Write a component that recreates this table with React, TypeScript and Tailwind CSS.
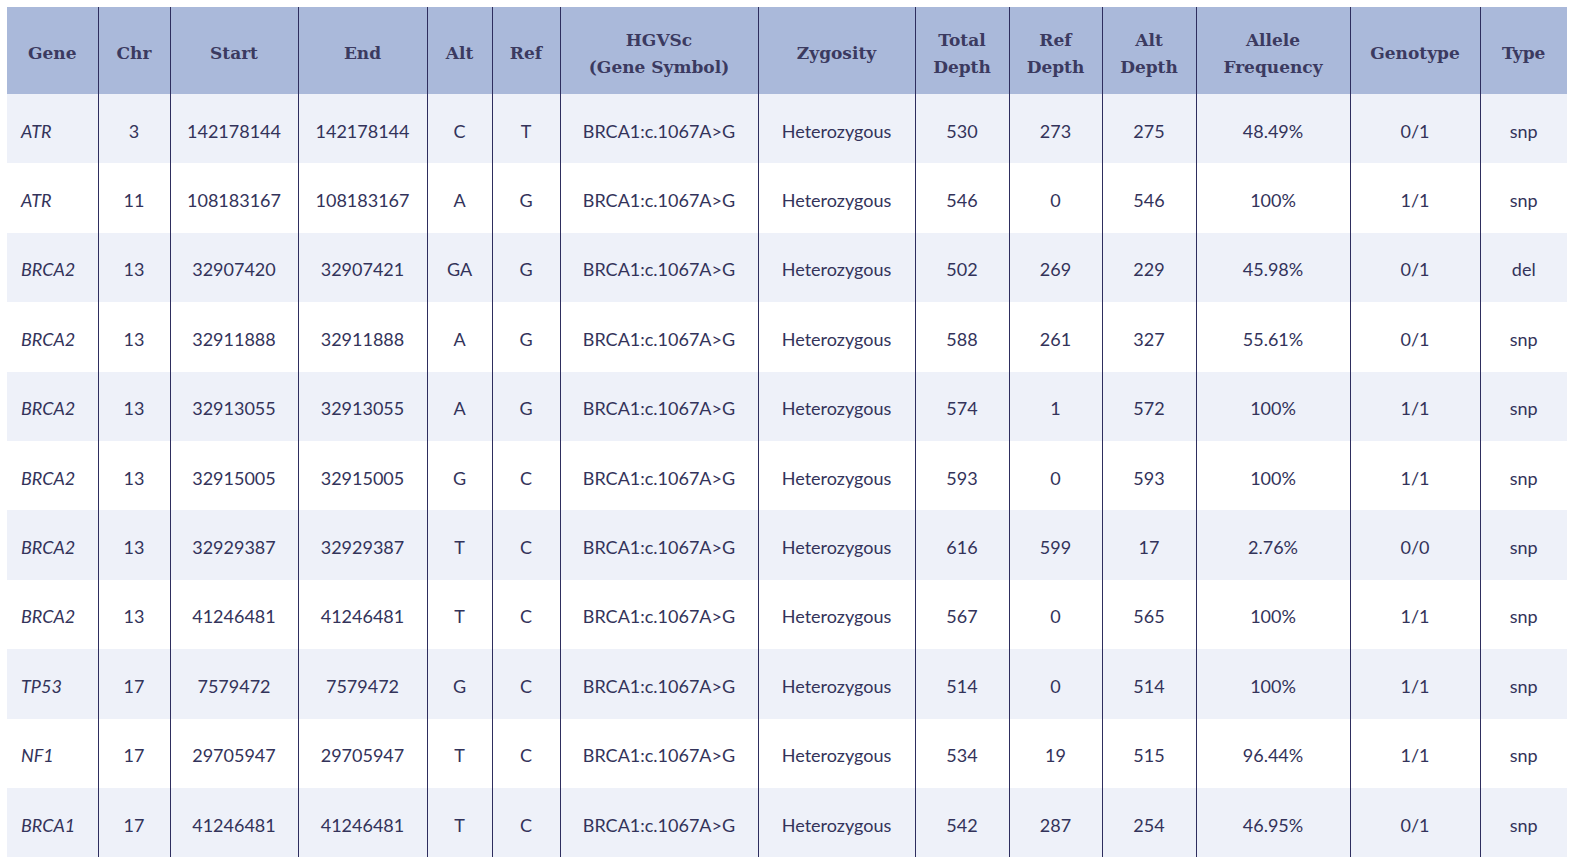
const COLUMNS = [
  { key: "gene", label: ["Gene"], width: 91 },
  { key: "chr", label: ["Chr"], width: 72 },
  { key: "start", label: ["Start"], width: 128 },
  { key: "end", label: ["End"], width: 129 },
  { key: "alt", label: ["Alt"], width: 65 },
  { key: "ref", label: ["Ref"], width: 68 },
  { key: "hgvs", label: ["HGVSc", "(Gene Symbol)"], width: 198 },
  { key: "zyg", label: ["Zygosity"], width: 157 },
  { key: "total", label: ["Total", "Depth"], width: 94 },
  { key: "refDepth", label: ["Ref", "Depth"], width: 93 },
  { key: "altDepth", label: ["Alt", "Depth"], width: 94 },
  { key: "af", label: ["Allele", "Frequency"], width: 154 },
  { key: "gt", label: ["Genotype"], width: 130 },
  { key: "type", label: ["Type"], width: 87 },
];

type Variant = [string, string, string, string, string, string, string, string, string, string, string, string];

// gene, chr, start, end, alt, ref, total, refDepth, altDepth, af, gt, type
const ROWS: Variant[] = [
  ["ATR", "3", "142178144", "142178144", "C", "T", "530", "273", "275", "48.49%", "0/1", "snp"],
  ["ATR", "11", "108183167", "108183167", "A", "G", "546", "0", "546", "100%", "1/1", "snp"],
  ["BRCA2", "13", "32907420", "32907421", "GA", "G", "502", "269", "229", "45.98%", "0/1", "del"],
  ["BRCA2", "13", "32911888", "32911888", "A", "G", "588", "261", "327", "55.61%", "0/1", "snp"],
  ["BRCA2", "13", "32913055", "32913055", "A", "G", "574", "1", "572", "100%", "1/1", "snp"],
  ["BRCA2", "13", "32915005", "32915005", "G", "C", "593", "0", "593", "100%", "1/1", "snp"],
  ["BRCA2", "13", "32929387", "32929387", "T", "C", "616", "599", "17", "2.76%", "0/0", "snp"],
  ["BRCA2", "13", "41246481", "41246481", "T", "C", "567", "0", "565", "100%", "1/1", "snp"],
  ["TP53", "17", "7579472", "7579472", "G", "C", "514", "0", "514", "100%", "1/1", "snp"],
  ["NF1", "17", "29705947", "29705947", "T", "C", "534", "19", "515", "96.44%", "1/1", "snp"],
  ["BRCA1", "17", "41246481", "41246481", "T", "C", "542", "287", "254", "46.95%", "0/1", "snp"],
];

export default function App() {
  return (
    <div className="min-h-[866px] w-[1578px] bg-white pl-[7px] pt-[7px]">
      <table className="w-[1560px] table-fixed border-collapse text-[#33335a]">
        <colgroup>
          {COLUMNS.map((c) => (
            <col key={c.key} style={{ width: c.width }} />
          ))}
        </colgroup>
        <thead>
          <tr className="bg-[#aab9da]">
            {COLUMNS.map((c, i) => (
              <th
                key={c.key}
                className={
                  "box-border h-[87px] px-1 pt-[6px] font-['DejaVu_Serif',serif] text-[17px] font-bold leading-[27px] text-[#3b3a60] " +
                  (i === 0 ? "" : "border-l border-[#2e2e5e]")
                }
              >
                {c.label.map((l) => (
                  <div key={l}>{l}</div>
                ))}
              </th>
            ))}
          </tr>
        </thead>
        <tbody>
          {ROWS.map((r, ri) => {
            const cells = [r[0], r[1], r[2], r[3], r[4], r[5], "BRCA1:c.1067A>G", "Heterozygous", r[6], r[7], r[8], r[9], r[10], r[11]];
            return (
              <tr key={ri} className={ri % 2 === 0 ? "bg-[#eef1f9]" : "bg-white"}>
                {cells.map((v, ci) => (
                  <td
                    key={ci}
                    className={
                      "box-border h-[69.4px] pt-[4px] font-['Lato',sans-serif] text-[18px] leading-[24px] " +
                      (ci === 0
                        ? "pl-[14px] text-left italic"
                        : "border-l border-[#2e2e5e] text-center")
                    }
                  >
                    {v}
                  </td>
                ))}
              </tr>
            );
          })}
        </tbody>
      </table>
    </div>
  );
}
